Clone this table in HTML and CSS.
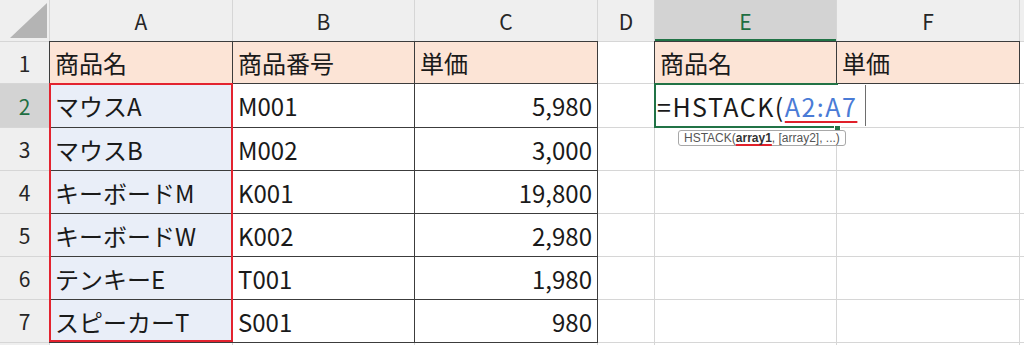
FILE: index.html
```html
<!DOCTYPE html>
<html lang="ja">
<head>
<meta charset="utf-8">
<link rel="stylesheet" href="styles.css">
</head>
<body>
<div class="sheet">
  <div class="corner"><svg width="49" height="41" viewBox="0 0 49 41"><polygon points="10,38 47,38 47,3" fill="#b4b4b4"/></svg></div>
  <div class="ch">A</div><div class="ch">B</div><div class="ch">C</div><div class="ch">D</div><div class="ch sel">E</div><div class="ch">F</div><div class="ch"></div>

  <div class="rh">1</div>
  <div class="c hd tb">商品名</div><div class="c hd tb">商品番号</div><div class="c hd tb">単価</div><div class="c"></div><div class="c hd tb">商品名</div><div class="c hd tb">単価</div><div class="c"></div>

  <div class="rh sel">2</div>
  <div class="c rng tb">マウスA</div><div class="c tb">M001</div><div class="c tb num">5,980</div><div class="c"></div><div class="c"></div><div class="c"></div><div class="c"></div>

  <div class="rh">3</div>
  <div class="c rng tb">マウスB</div><div class="c tb">M002</div><div class="c tb num">3,000</div><div class="c"></div><div class="c"></div><div class="c"></div><div class="c"></div>

  <div class="rh">4</div>
  <div class="c rng tb">キーボードM</div><div class="c tb">K001</div><div class="c tb num">19,800</div><div class="c"></div><div class="c"></div><div class="c"></div><div class="c"></div>

  <div class="rh">5</div>
  <div class="c rng tb">キーボードW</div><div class="c tb">K002</div><div class="c tb num">2,980</div><div class="c"></div><div class="c"></div><div class="c"></div><div class="c"></div>

  <div class="rh">6</div>
  <div class="c rng tb">テンキーE</div><div class="c tb">T001</div><div class="c tb num">1,980</div><div class="c"></div><div class="c"></div><div class="c"></div><div class="c"></div>

  <div class="rh">7</div>
  <div class="c rng tb">スピーカーT</div><div class="c tb">S001</div><div class="c tb num">980</div><div class="c"></div><div class="c"></div><div class="c"></div><div class="c"></div>

  <div class="rh"></div>
  <div class="c"></div><div class="c"></div><div class="c"></div><div class="c"></div><div class="c"></div><div class="c"></div><div class="c"></div>

  <div class="range-box"></div>
  <div class="active-box"></div>
  <div class="editor">=HSTACK(<span class="ref">A2:A7</span></div>
  <div class="fill-handle"></div>
  <div class="tip">HSTACK(<b class="arg">array1</b>, [array2], ...)</div>
</div>
</body>
</html>
```

FILE: styles.css
```css
html, body {
  margin: 0;
  padding: 0;
  background: #ffffff;
  overflow: hidden;
}

.sheet {
  position: relative;
  width: 1024px;
  height: 345px;
  display: grid;
  grid-template-columns: 49px 182px 181px 182px 56px 181px 182px 1fr;
  grid-template-rows: 41px 41px 43px 42px 42px 42px 42px 42px 1fr;
  gap: 1px;
  background: #d6d6d6;
  font-family: "Noto Sans CJK JP", "Noto Sans", sans-serif;
  color: #1a1a1a;
  overflow: hidden;
}

.corner {
  background: #efefef;
}

.corner svg {
  display: block;
}

.ch {
  background: #efefef;
  display: flex;
  align-items: center;
  justify-content: center;
  font-size: 21px;
  color: #262626;
}

.ch.sel {
  background: #d3d3d3;
  color: #1e6e42;
  box-shadow: inset 0 -2px 0 #217346;
}

.rh {
  background: #efefef;
  display: flex;
  align-items: center;
  justify-content: center;
  font-size: 21px;
  color: #262626;
}

.rh.sel {
  background: #d3d3d3;
  color: #1e6e42;
}

.c {
  background: #ffffff;
  display: flex;
  align-items: center;
  padding: 0 5px;
  font-size: 24px;
  white-space: nowrap;
  overflow: hidden;
}

.c.hd {
  background: #fce4d6;
}

.c.rng {
  background: #e9eef8;
}

.c.num {
  justify-content: flex-end;
}

.c.tb {
  outline: 1px solid #3c3c3c;
}

.range-box {
  position: absolute;
  left: 49px;
  top: 83px;
  width: 184px;
  height: 259px;
  box-sizing: border-box;
  border: 2px solid #e3232f;
}

.active-box {
  position: absolute;
  left: 654px;
  top: 83px;
  width: 184px;
  height: 45px;
  box-sizing: border-box;
  border: 2px solid #217346;
}

.editor {
  position: absolute;
  left: 656px;
  top: 85px;
  width: 210px;
  height: 41px;
  box-sizing: border-box;
  background: #ffffff;
  border-right: 1px solid #6e6e6e;
  padding-left: 1px;
  display: flex;
  align-items: center;
  font-size: 25px;
  letter-spacing: 1.5px;
  white-space: nowrap;
  color: #1a1a1a;
}

.editor .ref {
  color: #4a7bd6;
  text-decoration: underline;
  text-decoration-color: #e0202a;
  text-decoration-thickness: 2px;
  text-underline-offset: 4px;
}

.fill-handle {
  position: absolute;
  left: 834px;
  top: 125px;
  width: 5px;
  height: 5px;
  background: #217346;
  border: 1px solid #ffffff;
}

.tip {
  position: absolute;
  left: 678px;
  top: 130px;
  height: 16px;
  padding: 0 5px;
  box-sizing: border-box;
  background: #ffffff;
  border: 1px solid #a8a8a8;
  border-radius: 3px;
  font-family: "Liberation Sans", "Noto Sans", sans-serif;
  font-size: 12px;
  line-height: 14px;
  color: #555555;
  white-space: nowrap;
}

.tip .arg {
  color: #333333;
  text-decoration: underline;
  text-decoration-color: #e0202a;
  text-decoration-thickness: 2px;
  text-underline-offset: 2px;
}
```
